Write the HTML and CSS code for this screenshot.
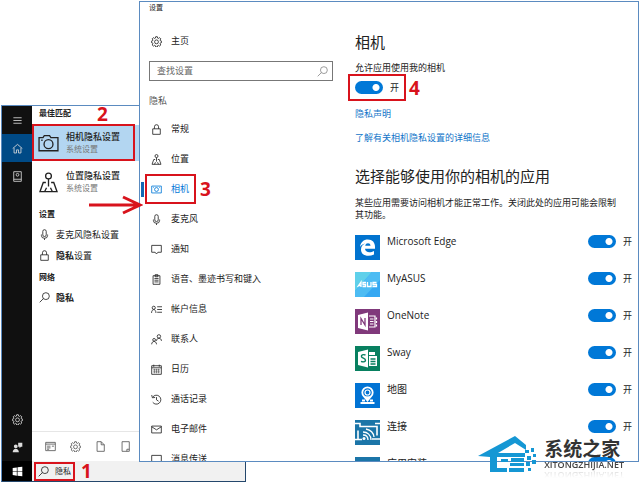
FILE: index.html
```html
<!DOCTYPE html>
<html lang="zh-CN">
<head>
  <meta charset="utf-8">
  <title>相机隐私设置</title>
  <link rel="stylesheet" href="styles.css">
</head>
<body>
  <!-- shared icons -->
  <svg class="sprite" aria-hidden="true">
    <symbol id="gear" viewBox="0 0 16 16">
      <path d="M6.8 1h2.4l.4 2 1.3.5 1.7-1.1 1.7 1.7-1.1 1.7.5 1.3 1.8.4v2l-1.8.5-.5 1.3 1.1 1.7-1.7 1.7-1.7-1.1-1.3.5-.4 1.900H6.800l-.4-1.900-1.300-.5-1.700 1.100-1.700-1.700 1.100-1.700-.5-1.300L.5 9.500v-2l1.800-.4.5-1.300-1.100-1.700 1.700-1.700 1.700 1.100L6.400 3z"/>
      <circle cx="8" cy="8.500" r="2.800"/>
    </symbol>
    <symbol id="lens" viewBox="0 0 16 16">
      <circle cx="10" cy="6" r="5"/><path d="M6.500 9.500L1 15"/>
    </symbol>
    <symbol id="lock" viewBox="0 0 16 16">
      <path d="M2.500 7h11v8h-11zM5 7V4a3 3 0 0 1 6 0v3"/>
    </symbol>
    <symbol id="mic" viewBox="0 0 16 16">
      <rect x="5.500" y="1" width="5" height="10" rx="2.500"/><path d="M3.500 8v1.500a4.500 4 0 0 0 9 0V8M8 13.500V16"/>
    </symbol>
    <symbol id="pin" viewBox="0 0 16 16">
      <circle cx="8" cy="3" r="2.200"/><path d="M8 5.200V11M6 8H4L1.500 15h13L12 8h-2M5 15l1.500-3M11 15l-1.500-3"/>
    </symbol>
    <symbol id="camera" viewBox="0 0 16 16">
      <path d="M.8 3.500h3L4.800 2h4l1 1.500h5.400v10H.8z"/><circle cx="8" cy="8.500" r="3.400"/><path d="M2.500 5.500h1"/>
    </symbol>
    <symbol id="bubble" viewBox="0 0 16 16">
      <path d="M1 2h14v10h-5l-2 2.500L6 12H1z"/>
    </symbol>
    <symbol id="message" viewBox="0 0 16 16">
      <path d="M1 2h14v10H6l-3 3v-3H1z"/>
    </symbol>
  </svg>

  <section class="search-window">
    <nav class="rail">
      <button aria-label="菜单"><svg viewBox="0 0 16 16"><path d="M2 4h12M2 8h12M2 12h12"/></svg></button>
      <button class="active" aria-label="主页"><svg viewBox="0 0 16 16"><path d="M1 8l7-6 7 6M3 7v7.500h3.500V10h3v4.500H13V7"/></svg></button>
      <button aria-label="笔记本"><svg viewBox="0 0 16 16"><path d="M2.500 1h11v14h-11zM2.500 12h11"/><circle cx="8" cy="5.500" r="2"/></svg></button>
      <button class="push" aria-label="设置"><svg><use href="#gear"/></svg></button>
      <button aria-label="反馈"><svg viewBox="0 0 16 16" class="solid"><path d="M9 1h6v6h-2l-2 2V7H9zM5.500 3.500a2.800 2.800 0 1 1 0 5.600 2.800 2.800 0 0 1 0-5.600zM1 15c0-7 9-7 9 0z"/></svg></button>
      <button class="start" aria-label="开始"><svg viewBox="0 0 16 16" class="solid"><path d="M1 3l6-1v5.500H1zM8 1.800L15 1v6.500H8zM1 8.500h6V14l-6-1zM8 8.500h7V15l-7-.8z"/></svg></button>
    </nav>
    <div class="results">
      <h2>最佳匹配</h2>
      <a class="match selected" href="#">
        <svg><use href="#camera"/></svg>
        <span><b>相机隐私设置</b><small>系统设置</small></span>
      </a>
      <a class="match" href="#">
        <svg><use href="#pin"/></svg>
        <span><b>位置隐私设置</b><small>系统设置</small></span>
      </a>
      <h2 class="row">设置</h2>
      <a class="row" href="#"><svg><use href="#mic"/></svg><span>麦克风隐私设置</span></a>
      <a class="row" href="#"><svg><use href="#lock"/></svg><span><strong>隐私</strong>设置</span></a>
      <h2 class="row">网络</h2>
      <a class="row" href="#"><svg><use href="#lens"/></svg><strong>隐私</strong></a>
      <div class="filters">
        <button aria-label="应用"><svg viewBox="0 0 16 16"><path d="M1 2h14v12H1zM1 4.500h14M3 7.500h5M3 10h5M3 12h3M10 7.500h3"/></svg></button>
        <button aria-label="设置"><svg><use href="#gear"/></svg></button>
        <button aria-label="文档"><svg viewBox="0 0 16 16"><path d="M3 1h6l4.500 4.500V15H3zM9 1v4.500h4.500"/></svg></button>
        <button aria-label="照片"><svg viewBox="0 0 16 16"><path d="M3 1h10.500v14H3zM10 15v-3h3.500"/></svg></button>
      </div>
      <div class="taskbar">
        <label class="query">
          <svg><use href="#lens"/></svg>
          <input type="text" value="隐私" aria-label="搜索">
        </label>
        <span class="step">1</span>
      </div>
    </div>
  </section>

  <section class="settings-window">
    <header>设置</header>
    <div class="columns">
      <nav class="menu">
        <a class="home" href="#"><svg><use href="#gear"/></svg>主页</a>
        <label class="find">
          <input type="text" placeholder="查找设置" aria-label="查找设置">
          <svg><use href="#lens"/></svg>
        </label>
        <h3>隐私</h3>
        <a href="#"><svg><use href="#lock"/></svg>常规</a>
        <a href="#"><svg><use href="#pin"/></svg>位置</a>
        <a class="current" href="#"><svg viewBox="0 0 16 16"><path d="M1 3h14v10H1z"/><circle cx="8" cy="8" r="2.800"/><path d="M3 5h1M12 5h1"/></svg>相机</a>
        <a href="#"><svg><use href="#mic"/></svg>麦克风</a>
        <a href="#"><svg><use href="#bubble"/></svg>通知</a>
        <a href="#"><svg viewBox="0 0 16 16"><path d="M3 2.500h10V15H3zM6 1h4v3H6zM5 6.500h6M5 9h6M5 11.500h6"/></svg>语音、墨迹书写和键入</a>
        <a href="#"><svg viewBox="0 0 16 16"><circle cx="4" cy="5.500" r="2.300"/><path d="M.8 13c0-6.500 6.400-6.500 6.400 0M9 4h7M9 8h7M9 12h7"/></svg>帐户信息</a>
        <a href="#"><svg viewBox="0 0 16 16"><circle cx="11.500" cy="3.500" r="2.500"/><path d="M8 10c0-5 7.200-5 7.200 0"/><circle cx="4.500" cy="8.500" r="2"/><path d="M1 15c0-5.500 7-5.500 7 0"/></svg>联系人</a>
        <a href="#"><svg viewBox="0 0 16 16"><path d="M1 2.500h14V15H1zM1 5.500h14M4 1v3M12 1v3"/><path stroke-width=".7" d="M3 8.500h10M3 11.500h10M5 7v6.500M8 7v6.500M11 7v6.500"/></svg>日历</a>
        <a href="#"><svg viewBox="0 0 16 16"><path d="M2.500 4.500a6.500 6.500 0 1 1 0 7.500M1 1.500l1 4 4-.5M8 4.500v4l3 2"/></svg>通话记录</a>
        <a href="#"><svg viewBox="0 0 16 16"><path d="M1 3h14v10H1zM1 4l7 4.500L15 4"/></svg>电子邮件</a>
        <a href="#"><svg><use href="#message"/></svg>消息传送</a>
      </nav>

      <main>
        <h1>相机</h1>
        <p class="allow" id="allow">允许应用使用我的相机</p>
        <div class="master-row">
          <label class="toggle master"><input type="checkbox" aria-labelledby="allow" checked>开</label>
          <span class="step">4</span>
        </div>
        <a class="link" href="#">隐私声明</a>
        <a class="link" href="#">了解有关相机隐私设置的详细信息</a>
        <h1 class="choose">选择能够使用你的相机的应用</h1>
        <p class="note">某些应用需要访问相机才能正常工作。关闭此处的应用可能会限制其功能。</p>
        <ul class="apps">
          <li>
            <svg viewBox="0 0 25 25"><path fill="#0173cf" d="M0 0h25v25H0z"/><path fill="#fff" d="M5 12c.6-5 3.800-7.500 7.800-7.500 4.700 0 7.200 3.200 7.200 7.200v2H10c.2 4 5.500 4.200 9 2.200v3.600c-5.500 2.600-13 1.500-13-5 0-3 1.600-5 4.200-6-2.400.4-4.200 1.800-5.200 3.500zM10.200 10.800h5.300c0-3.300-4.900-3.300-5.300 0z"/></svg>
            <span>Microsoft Edge</span>
            <label class="toggle"><input type="checkbox" aria-label="Microsoft Edge" checked>开</label>
          </li>
          <li>
            <svg viewBox="0 0 25 25"><path fill="#35a8f2" d="M0 0h25v25H0z"/><path fill="#5fd0ea" d="M0 0h17L0 19z"/><path fill="#4dbcf3" d="M17 0h8v8L9 25H0v-6z"/><path fill="none" stroke="#fff" stroke-width="1.300" d="M2.500 15l3.500-5v5M4 13.500h2M11 10.500H8v2h2.500v2H7.500M12.500 10v4.500H16V10M21.500 10.500H18v2h3.500v2H17.500"/></svg>
            <span>MyASUS</span>
            <label class="toggle"><input type="checkbox" aria-label="MyASUS" checked>开</label>
          </li>
          <li>
            <svg viewBox="0 0 25 25"><path fill="#80397b" d="M0 0h25v25H0z"/><path fill="#fff" d="M3 6l10-2.500v18L3 19z"/><path fill="none" stroke="#80397b" stroke-width="1.300" d="M6 16V9.500l4 6.500V9"/><path fill="none" stroke="#fff" stroke-width="1.200" d="M14 7h6v11h-6M15 10h3.500M15 12.500h3.500M15 15h3.500M21.500 8.500v2M21.500 12v2M21.500 15.500v2"/></svg>
            <span>OneNote</span>
            <label class="toggle"><input type="checkbox" aria-label="OneNote" checked>开</label>
          </li>
          <li>
            <svg viewBox="0 0 25 25"><path fill="#088060" d="M0 0h25v25H0z"/><path fill="#fff" d="M3 6l10-2.500v18L3 19zM14 6h6v3h-6zM14 10h8v10h-8z"/><path fill="none" stroke="#088060" stroke-width="1.400" d="M10.500 9C8 8 6 9 6.500 10.700c.5 1.600 4 1.500 4 3.500 0 1.800-2.500 2-4.500 1.200M15.500 13h5M15.500 15.500h5M15.500 18h5"/></svg>
            <span>Sway</span>
            <label class="toggle"><input type="checkbox" aria-label="Sway" checked>开</label>
          </li>
          <li>
            <svg viewBox="0 0 25 25"><path fill="#0173d4" d="M0 0h25v25H0z"/><g fill="none" stroke="#fff"><path fill="#fff" stroke="none" d="M8 13.500h9L12.500 19z"/><circle cx="12.500" cy="9.500" r="5.200" stroke-width="1.800"/><circle cx="12.500" cy="9.500" r="2.500" stroke-width="1.200"/><path stroke-width="1.800" d="M7 17.500h3M15 17.500h3M5.500 20h14"/></g></svg>
            <span>地图</span>
            <label class="toggle"><input type="checkbox" aria-label="地图" checked>开</label>
          </li>
          <li>
            <svg viewBox="0 0 25 25"><path fill="#1b75a8" d="M0 0h25v25H0z"/><g fill="none" stroke="#fff" stroke-width="1.600"><path d="M0 3.500h5v3h17v9M25 3.500h-5M0 19.500h3v-9M3 19.500h4M25 19h-8"/><path stroke-width="1.300" d="M8 12c4.500 0 8 3 8 8M8 15c3 0 5 2 5 5M11 9c4.500 1 7.500 4 8 8"/></g><circle cx="9" cy="18.500" r="1.500" fill="#fff"/></svg>
            <span>连接</span>
            <label class="toggle"><input type="checkbox" aria-label="连接" checked>开</label>
          </li>
          <li>
            <svg viewBox="0 0 25 25"><path fill="#1b75a8" d="M0 0h25v25H0z"/></svg>
            <span>应用安装</span>
            <label class="toggle"><input type="checkbox" aria-label="应用安装" checked></label>
          </li>
        </ul>
      </main>
    </div>
  </section>

  <!-- step marks drawn over both windows -->
  <div class="mark-camera"></div>
  <span class="step step-two">2</span>
  <svg class="arrow" viewBox="0 0 54 20"><path d="M0 10h51M34 2l17 8-17 8"/></svg>

  <div class="watermark">
    <svg viewBox="0 0 60 36">
      <path fill="#1597d4" d="M0 20L37 0l11 9v5l-11-7-17 10h27v4H19v11h10v4H12V21z"/>
      <path fill="#1597d4" d="M23 23h7v3h-7zM33 22h13v4H33zM32 27h14v3H32zM31 32h15v4H31zM47 14h4v3h-4zM53 12h3v4h-3zM49 20h4v4h-4zM55 18h3v3h-3zM48 26h4v4h-4zM54 24h4v4h-4zM50 32h3v3h-3z"/>
    </svg>
    <div>
      <strong>系统之家</strong>
      <span>XITONGZHIJIA.NET</span>
    </div>
  </div>
</body>
</html>
```

FILE: styles.css
```css
:root {
  --blue: #0078d7;
  --frame: #5b8bc0;
  --red: #d8131c;
  --text: #222;
}

* {
  box-sizing: border-box;
}

body {
  position: relative;
  height: 100vh;
  margin: 0;
  overflow: hidden;
  background: #fff;
  color: var(--text);
  font-family: "Open Sans", "Noto Sans CJK SC", sans-serif;
  font-size: 9px;
  line-height: 12px;
}

h1, h2, h3, p, ul {
  margin: 0;
  padding: 0;
  font-weight: 400;
}

a {
  color: inherit;
  text-decoration: none;
}

button {
  border: 0;
  padding: 0;
  background: none;
  color: inherit;
}

input {
  min-width: 0;
  margin: 0;
  border: 0;
  padding: 0;
  background: none;
  color: inherit;
  font: inherit;
  outline: none;
}

svg {
  flex: none;
  width: 11px;
  height: 11px;
  fill: none;
  stroke: currentColor;
  stroke-width: 1.2;
}

.solid {
  fill: currentColor;
  stroke: none;
}

.sprite {
  position: absolute;
  width: 0;
  height: 0;
}

.step {
  color: var(--red);
  font-size: 19px;
  font-weight: 700;
  line-height: 20px;
}

/* Start menu search */
.search-window {
  position: absolute;
  top: 105px;
  bottom: 1px;
  left: 1px;
  width: 245px;
  display: flex;
  border: 1px solid var(--frame);
  border-right: 1px solid #24476c;
  border-bottom-color: #24476c;
}

.rail {
  display: flex;
  flex-direction: column;
  width: 30px;
  background: #101010;
  color: #ddd;
}

.rail button {
  display: flex;
  align-items: center;
  justify-content: center;
  height: 28px;
}

.rail .active {
  background: #004a86;
}

.rail .push {
  margin-top: auto;
}

.rail .start {
  height: 20px;
  background: #000;
  color: #fff;
}

.results {
  flex: 1;
  display: flex;
  flex-direction: column;
}

.results h2 {
  padding: 1px 7px 6px;
  font-size: 8px;
  font-weight: 700;
}

.match {
  display: flex;
  align-items: center;
  gap: 7px;
  height: 36px;
  margin-bottom: 3px;
  padding-left: 6px;
}

.match svg {
  width: 21px;
  height: 21px;
  stroke-width: 1;
}

.match b {
  display: block;
  font-weight: 500;
}

.match small {
  display: block;
  color: #777;
  font-size: 8px;
}

.selected {
  background: #b3d6f1;
}

.results .row {
  display: flex;
  align-items: center;
  gap: 6px;
  height: 21px;
  padding: 0 7px;
}

.filters {
  display: flex;
  align-items: center;
  gap: 14px;
  height: 30px;
  margin-top: auto;
  border-top: 1px solid #e6e6e6;
  padding-left: 13px;
  color: #555;
}

.filters button {
  display: flex;
}

.taskbar {
  display: flex;
  align-items: center;
  gap: 6px;
  height: 20px;
  padding-left: 2px;
  background: #f1f1f1;
}

.query {
  display: flex;
  align-items: center;
  gap: 6px;
  width: 41px;
  height: 19px;
  border: 2px solid var(--red);
  padding-left: 2px;
  font-size: 8px;
}

.query input {
  width: 18px;
}

/* Settings app */
.settings-window {
  position: absolute;
  top: 1px;
  right: 1px;
  bottom: 21px;
  left: 139px;
  overflow: hidden;
  border: 1px solid var(--frame);
  background: #fff;
}

.settings-window header {
  height: 24px;
  padding-left: 9px;
  font-size: 7px;
}

.columns {
  display: flex;
}

.menu {
  width: 206px;
  padding-left: 9px;
}

.menu a {
  display: flex;
  align-items: center;
  gap: 9px;
  height: 30px;
  padding-left: 2px;
}

.find {
  display: flex;
  align-items: center;
  width: 184px;
  height: 20px;
  margin: 5px 0 14px;
  border: 1px solid #777;
  padding: 0 4px 0 7px;
}

.find input {
  flex: 1;
}

.find input::placeholder {
  color: #666;
}

.find svg {
  color: #888;
}

.menu h3 {
  height: 19px;
  color: #555;
  font-size: 9px;
}

.menu .current {
  position: relative;
  width: 51px;
  margin-left: -4px;
  border: 2px solid var(--red);
  padding-left: 4px;
  color: var(--blue);
}

.current::before {
  content: "";
  position: absolute;
  top: 6px;
  left: -6px;
  width: 3px;
  height: 15px;
  background: #1467b3;
}

.current::after {
  content: "3";
  position: absolute;
  left: 53px;
  color: var(--red);
  font-size: 19px;
  font-weight: 700;
}

main {
  flex: 1;
  padding: 4px 6px 0 9px;
}

h1 {
  font-size: 15px;
  line-height: 24px;
}

.allow {
  padding-top: 8px;
}

.toggle {
  display: flex;
  align-items: center;
  gap: 7px;
}

.toggle input {
  appearance: none;
  flex: none;
  width: 28px;
  height: 13px;
  border-radius: 7px;
  background: radial-gradient(circle at 21px 50%, #fff 3px, transparent 4px) #ccc;
}

.toggle input:checked {
  background-color: var(--blue);
}

.master-row {
  display: flex;
  align-items: center;
  gap: 3px;
  margin: 0 0 7px -7px;
}

.master {
  width: 58px;
  height: 27px;
  border: 2px solid var(--red);
  padding-left: 5px;
}

.link {
  display: block;
  width: fit-content;
  margin-bottom: 12px;
  color: #0f74c8;
}

.choose {
  margin-top: 20px;
}

.note {
  padding: 9px 10px 14px 0;
}

.apps {
  display: flex;
  flex-direction: column;
  gap: 12px;
  list-style: none;
}

.apps li {
  display: flex;
  align-items: flex-start;
  gap: 7px;
  height: 25px;
}

.apps svg {
  width: 25px;
  height: 25px;
  stroke: none;
}

.apps li > span {
  flex: 1;
  font-size: 10px;
}

.apps li:last-child .toggle {
  padding-right: 16px;
}

/* Step marks */
.mark-camera {
  position: absolute;
  top: 124px;
  left: 32px;
  width: 103px;
  height: 37px;
  border: 2px solid var(--red);
}

.step-two {
  position: absolute;
  top: 104px;
  left: 97px;
}

.arrow {
  position: absolute;
  top: 195px;
  left: 89px;
  width: 54px;
  height: 20px;
  stroke: var(--red);
  stroke-width: 3;
}

/* Site logo */
.watermark {
  position: absolute;
  right: 16px;
  bottom: 11px;
  display: flex;
  align-items: center;
  gap: 6px;
}

.watermark svg {
  width: 60px;
  height: 36px;
  stroke: none;
}

.watermark strong {
  display: block;
  color: #333;
  font-size: 19px;
  line-height: 22px;
}

.watermark span {
  display: block;
  color: #444;
  font-size: 9px;
  font-weight: 600;
  line-height: 10px;
  -webkit-box-reflect: below 0 linear-gradient(transparent 20%, rgba(0, 0, 0, 0.2));
}
```
